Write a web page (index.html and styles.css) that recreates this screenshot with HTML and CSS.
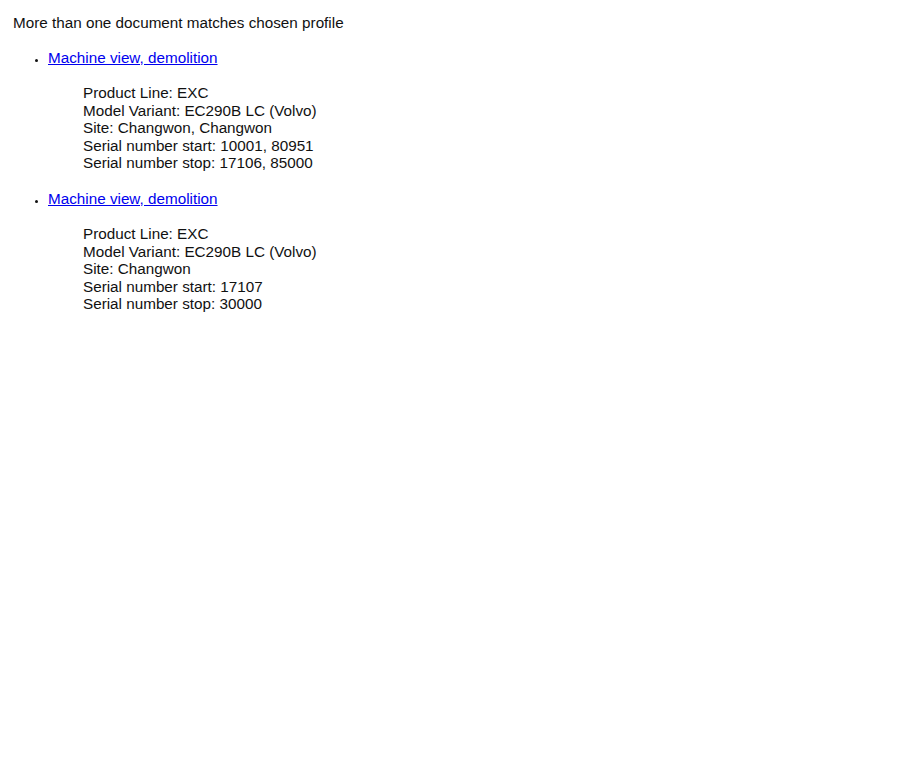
FILE: index.html
```html
<!DOCTYPE html>
<html>
<head>
<meta charset="utf-8">
<link rel="stylesheet" href="styles.css">
</head>
<body>
<div class="page">
  <p class="title">More than one document matches chosen profile</p>
  <ul class="docs">
    <li class="doc">
      <a class="doc-link" href="#">Machine view, demolition</a>
      <div class="details">
        <div>Product Line: EXC</div>
        <div>Model Variant: EC290B LC (Volvo)</div>
        <div>Site: Changwon, Changwon</div>
        <div>Serial number start: 10001, 80951</div>
        <div>Serial number stop: 17106, 85000</div>
      </div>
    </li>
    <li class="doc">
      <a class="doc-link" href="#">Machine view, demolition</a>
      <div class="details">
        <div>Product Line: EXC</div>
        <div>Model Variant: EC290B LC (Volvo)</div>
        <div>Site: Changwon</div>
        <div>Serial number start: 17107</div>
        <div>Serial number stop: 30000</div>
      </div>
    </li>
  </ul>
</div>
</body>
</html>
```
FILE: styles.css
```css
html, body {
  margin: 0;
  padding: 0;
  background: #ffffff;
}
.page {
  padding: 14px 0 0 13px;
  font-family: "Liberation Sans", Arial, sans-serif;
  font-size: 15.25px;
  line-height: 17.5px;
  color: #111111;
}
.title {
  margin: 0 0 17px 0;
}
.docs {
  margin: 0;
  padding: 0 0 0 35px;
  list-style: disc outside;
}
.doc {
  margin: 0 0 18px 0;
}
.doc::marker {
  font-size: 11px;
}
.doc-link {
  color: #0000ee;
  text-decoration: underline;
}
.details {
  margin: 18px 0 0 35px;
}
```
